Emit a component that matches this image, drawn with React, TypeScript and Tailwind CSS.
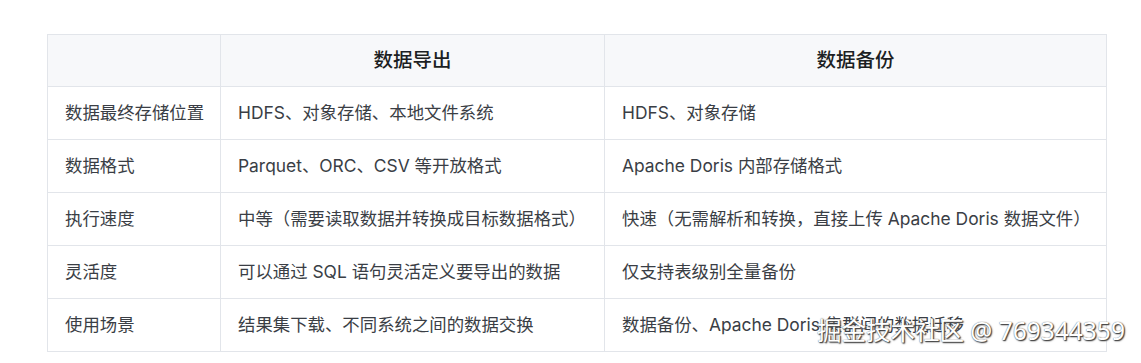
import React from "react";

const rows: [string, string, string][] = [
  ["数据最终存储位置", "HDFS、对象存储、本地文件系统", "HDFS、对象存储"],
  ["数据格式", "Parquet、ORC、CSV 等开放格式", "Apache Doris 内部存储格式"],
  ["执行速度", "中等（需要读取数据并转换成目标数据格式）", "快速（无需解析和转换，直接上传 Apache Doris 数据文件）"],
  ["灵活度", "可以通过 SQL 语句灵活定义要导出的数据", "仅支持表级别全量备份"],
  ["使用场景", "结果集下载、不同系统之间的数据交换", "数据备份、Apache Doris 集群间的数据迁移"],
];

export default function App() {
  return (
    <div
      className="relative w-[1141px] h-[363px] bg-white overflow-hidden"
      style={{ fontFamily: 'Inter, "Noto Sans CJK SC", sans-serif' }}
    >
      <div className="pt-[34px] pl-[47px]">
        <table className="border-collapse table-fixed w-[1059px]">
          <colgroup>
            <col className="w-[173px]" />
            <col className="w-[384px]" />
            <col className="w-[502px]" />
          </colgroup>
          <thead>
            <tr className="h-[52px] bg-[#f7f8fa]">
              <th className="border border-[#e2e5ea]"></th>
              <th className="border border-[#e2e5ea] text-[19.5px] font-medium text-[#1c1f23] text-center">数据导出</th>
              <th className="border border-[#e2e5ea] text-[19.5px] font-medium text-[#1c1f23] text-center">数据备份</th>
            </tr>
          </thead>
          <tbody>
            {rows.map((r, i) => (
              <tr key={i} className="h-[53px]">
                {r.map((c, j) => (
                  <td
                    key={j}
                    className="border border-[#e2e5ea] px-[17px] text-[17.4px] text-[#3a3e45] whitespace-nowrap"
                  >
                    {c}
                  </td>
                ))}
              </tr>
            ))}
          </tbody>
        </table>
      </div>
      <div
        className="absolute left-[817px] top-[319px] text-[24.5px] text-white whitespace-nowrap leading-none"
        style={{ fontFamily: '"Noto Sans", "Noto Sans CJK SC", sans-serif', textShadow: "0 0 1px #555, 1px 1px 1px #444, 1px 1px 2px #777" }}
      >
        掘金技术社区 @ 769344359
      </div>
    </div>
  );
}
